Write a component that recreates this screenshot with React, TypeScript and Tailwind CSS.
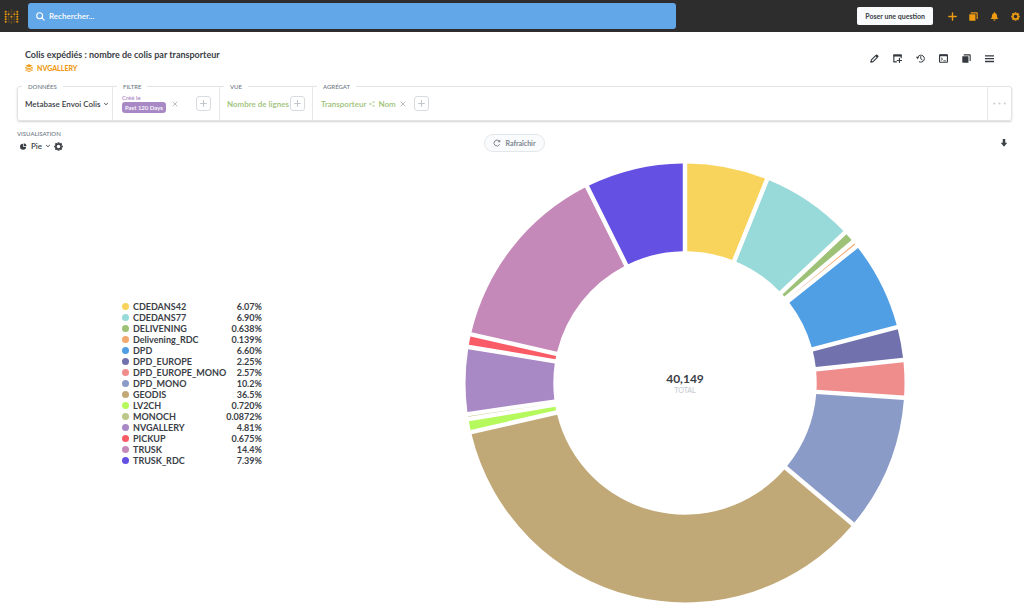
import React from "react";

type Slice = { name: string; value: number; label: string; color: string };

const slices: Slice[] = [
  { name: "CDEDANS42", value: 6.07, label: "6.07%", color: "#F9D45C" },
  { name: "CDEDANS77", value: 6.9, label: "6.90%", color: "#98D9D9" },
  { name: "DELIVENING", value: 0.638, label: "0.638%", color: "#9CC177" },
  { name: "Delivening_RDC", value: 0.139, label: "0.139%", color: "#F2A86F" },
  { name: "DPD", value: 6.6, label: "6.60%", color: "#509EE3" },
  { name: "DPD_EUROPE", value: 2.25, label: "2.25%", color: "#7172AD" },
  { name: "DPD_EUROPE_MONO", value: 2.57, label: "2.57%", color: "#EF8C8C" },
  { name: "DPD_MONO", value: 10.2, label: "10.2%", color: "#8A9BC7" },
  { name: "GEODIS", value: 36.5, label: "36.5%", color: "#C1A877" },
  { name: "LV2CH", value: 0.72, label: "0.720%", color: "#B5F95C" },
  { name: "MONOCH", value: 0.0872, label: "0.0872%", color: "#BCC78A" },
  { name: "NVGALLERY", value: 4.81, label: "4.81%", color: "#A989C5" },
  { name: "PICKUP", value: 0.675, label: "0.675%", color: "#F95C67" },
  { name: "TRUSK", value: 14.4, label: "14.4%", color: "#C589B9" },
  { name: "TRUSK_RDC", value: 7.39, label: "7.39%", color: "#6450E3" },
];

const OUTER = 219.5;
const INNER = 131.7;
const PAD = Math.PI / 180;

const point = (r: number, a: number) =>
  `${(r * Math.sin(a)).toFixed(2)},${(-r * Math.cos(a)).toFixed(2)}`;

function buildArcs() {
  const total = slices.reduce((sum, s) => sum + s.value, 0);
  const k = (2 * Math.PI - slices.length * PAD) / total;
  const padDistance = Math.hypot(OUTER, INNER) * Math.sin(PAD / 2);
  const p1 = Math.asin(padDistance / OUTER);
  const p0 = Math.asin(padDistance / INNER);
  let start = 0;
  return slices.map((s) => {
    const a0 = start;
    const a1 = start + s.value * k + PAD;
    start = a1;
    const mid = (a0 + a1) / 2;
    const o0 = a0 + p1;
    const o1 = a1 - p1;
    const collapsed = a1 - a0 <= 2 * p0;
    const i0 = collapsed ? mid : a0 + p0;
    const i1 = collapsed ? mid : a1 - p0;
    const large = o1 - o0 > Math.PI ? 1 : 0;
    const inner = collapsed ? "" : `A${INNER},${INNER} 0 ${large} 0 ${point(INNER, i0)}`;
    return {
      name: s.name,
      color: s.color,
      d: `M${point(OUTER, o0)}A${OUTER},${OUTER} 0 ${large} 1 ${point(OUTER, o1)}L${point(INNER, i1)}${inner}Z`,
    };
  });
}

const arcs = buildArcs();

function Icon({ children, className = "size-[10px]" }: { children: React.ReactNode; className?: string }) {
  return (
    <svg viewBox="0 0 32 32" fill="currentColor" aria-hidden="true" className={`block shrink-0 ${className}`}>
      {children}
    </svg>
  );
}

const stroke = { fill: "none", stroke: "currentColor", strokeWidth: 4, strokeLinecap: "round", strokeLinejoin: "round" } as const;

const PlusIcon = () => <path d="M16 3v26M3 16h26" {...stroke} strokeWidth={5} />;
const CloseIcon = () => <path d="M5 5l22 22M27 5L5 27" {...stroke} strokeWidth={5} />;
const ChevronIcon = () => <path d="M3 10l13 12 13-12" {...stroke} strokeWidth={7} />;
const DashboardsIcon = () => (
  <>
    <path d="M1 8h22v23H4a3 3 0 0 1-3-3z" />
    <path d="M6 1h22a3 3 0 0 1 3 3v21h-4V5H6z" />
  </>
);
const BellIcon = () => (
  <path d="M16 1c2 0 3 1.200 3 3 5 1.500 6 6 6 10 0 6 2 8 5 11H2c3-3 5-5 5-11 0-4 1-8.500 6-10 0-1.800 1-3 3-3zM12 27h8c0 3-2 4-4 4s-4-1-4-4z" />
);
const teeth = [0, 45, 90, 135, 180, 225, 270, 315];
const GearIcon = () => (
  <>
    <circle cx="16" cy="16" r="9" fill="none" stroke="currentColor" strokeWidth="5" />
    {teeth.map((angle) => (
      <path key={angle} d="M13 0.500h6l1 6h-8z" transform={`rotate(${angle} 16 16)`} />
    ))}
  </>
);

const toolbar: { label: string; icon: React.ReactNode }[] = [
  {
    label: "Modifier",
    icon: (
      <>
        <path d="M3 29l2-8L20 6l6 6L11 27z" {...stroke} />
        <path d="M20 5l4-4 7 7-4 4z" />
      </>
    ),
  },
  {
    label: "Ajouter au tableau de bord",
    icon: (
      <>
        <path d="M12 28H3V4h26v9" {...stroke} />
        <path d="M1 2h30v7H1z" />
        <path d="M23 15v15M15 23h16" {...stroke} />
      </>
    ),
  },
  {
    label: "Historique",
    icon: (
      <>
        <path d="M5 14A12.500 12.500 0 1 1 12 28" {...stroke} strokeWidth={3.5} />
        <path d="M0 10h11l-5 9z" />
        <path d="M17 9v8l5 4" {...stroke} strokeWidth={3.5} />
      </>
    ),
  },
  {
    label: "Voir le SQL",
    icon: (
      <>
        <rect x="2" y="2.500" width="28" height="27" rx="2" {...stroke} />
        <path d="M2 2h28v6H2z" />
        <path d="M8 14l5 4-5 4M17 24h6" {...stroke} strokeWidth={3} />
      </>
    ),
  },
  { label: "Dupliquer", icon: <DashboardsIcon /> },
  { label: "Référence", icon: <path d="M0 4h32v5H0zM0 14h32v5H0zM0 24h32v5H0z" /> },
];

function AddButton({ label }: { label: string }) {
  return (
    <button aria-label={label} className="flex size-[15px] shrink-0 items-center justify-center rounded-[3px] border border-[#d8dbe0] text-[#c0c5cc]">
      <Icon className="size-[7px]"><PlusIcon /></Icon>
    </button>
  );
}

function Section({ title, className, children }: { title: string; className: string; children: React.ReactNode }) {
  return (
    <section className={`relative flex items-center border-r border-[#e6e8ea] ${className}`}>
      <h2 className="absolute -top-1 left-1 bg-white px-[6px] text-[6px] leading-[7px] font-medium text-[#6d7884] uppercase">{title}</h2>
      {children}
    </section>
  );
}

const logoDots: [number, number, boolean][] = [];
const logoRows = ["10001", "11011", "10101", "10001", "10001"];
logoRows.forEach((row, y) => [...row].forEach((c, x) => logoDots.push([x, y, c === "1"])));

export default function App() {
  return (
    <div className="bg-white font-['Lato',sans-serif] text-[#3a4046]">
      <header className="flex h-8 items-center bg-[#2d2d2d] pr-1 pl-[4px]">
        <a href="#" aria-label="Accueil" className="mr-[9px]">
          <svg viewBox="0 0 15 15" className="block size-[15px]" aria-hidden="true">
            {logoDots.map(([x, y, on]) => (
              <circle key={`${x}-${y}`} cx={1.7 + x * 2.9} cy={2.7 + y * 2.5} r="1.050" fill="#EE9B12" opacity={on ? 0.95 : 0.25} />
            ))}
            <circle cx="7.500" cy="0.800" r="0.800" fill="#EE9B12" opacity="0.25" />
            <circle cx="7.500" cy="14.400" r="0.800" fill="#EE9B12" opacity="0.25" />
          </svg>
        </a>
        <label className="flex h-[26px] max-w-[648px] flex-1 items-center gap-1 rounded-[3px] bg-[#62a7e8] px-2 text-white">
          <Icon className="size-[9px]">
            <circle cx="13" cy="13" r="10.500" {...stroke} />
            <path d="M21 21l8 8" {...stroke} />
          </Icon>
          <input type="search" aria-label="Rechercher" placeholder="Rechercher..." className="min-w-0 flex-1 bg-transparent text-[8px] leading-[12px] font-semibold outline-none placeholder:text-white" />
        </label>
        <div className="ml-auto flex items-center gap-3">
          <button className="mr-[3px] h-[18px] rounded-[2px] bg-[#f9fbfc] px-2 text-[7px] leading-[10px] font-bold whitespace-nowrap">
            Poser une question
          </button>
          <button aria-label="Créer" className="text-[#EE9B12]"><Icon className="size-[9px]"><PlusIcon /></Icon></button>
          <button aria-label="Tableaux de bord" className="text-[#EE9B12]"><Icon className="size-[9px]"><DashboardsIcon /></Icon></button>
          <button aria-label="Notifications" className="text-[#EE9B12]"><Icon className="size-[9px]"><BellIcon /></Icon></button>
          <button aria-label="Paramètres" className="text-[#EE9B12]"><Icon className="size-[9px]"><GearIcon /></Icon></button>
        </div>
      </header>

      <main className="pt-4 pr-3 pl-[17px]">
        <div className="flex items-start justify-between pr-[18px] pl-2">
          <div>
            <h1 className="text-[9px] leading-[13px] font-bold">Colis expédiés : nombre de colis par transporteur</h1>
            <a href="#" className="mt-px flex items-center gap-1 text-[7px] leading-[12px] font-black text-[#EE9B12]">
              <Icon className="size-2">
                <path d="M16 1l15 6-15 6L1 7zM1 11l15 6 15-6v4l-15 6-15-6zM1 17l15 6 15-6v3l-15 6-15-6zM1 23l15 6 15-6v3l-15 6-15-6z" />
              </Icon>
              NVGALLERY
            </a>
          </div>
          <div className="mt-[6px] flex gap-[14px] text-[#33393f]">
            {toolbar.map((t) => (
              <button key={t.label} aria-label={t.label} title={t.label}>
                <Icon className="size-[9px]">{t.icon}</Icon>
              </button>
            ))}
          </div>
        </div>

        <div className="mt-3 flex h-[35px] rounded-[3px] border border-[#e2e4e6] text-[8px] leading-[10px] font-semibold shadow-[0_1px_2px_rgba(0,0,0,0.18)]">
          <Section title="Données" className="w-[95px] pl-[7px]">
            <button className="flex items-center gap-[3px] whitespace-nowrap">
              Metabase Envoi Colis
              <Icon className="size-[4px]"><ChevronIcon /></Icon>
            </button>
          </Section>
          <Section title="Filtre" className="w-[107px] justify-between pr-2 pl-[9px]">
            <div className="flex items-center gap-[6px]">
              <div className="flex flex-col items-start text-[6px] leading-[8px]">
                <span className="text-[#A989C5]">Créé le</span>
                <button className="h-[11px] rounded-[3px] bg-[#A989C5] px-[3px] whitespace-nowrap text-white">Past 120 Days</button>
              </div>
              <button aria-label="Retirer le filtre" className="text-[#b4bac1]"><Icon className="size-[6px]"><CloseIcon /></Icon></button>
            </div>
            <AddButton label="Ajouter un filtre" />
          </Section>
          <Section title="Vue" className="w-[93px] justify-between px-[7px]">
            <button className="whitespace-nowrap text-[#9CC177]">Nombre de lignes</button>
            <AddButton label="Ajouter une vue" />
          </Section>
          <Section title="Agrégat" className="flex-1 pl-2">
            <button className="flex items-center gap-[3px] text-[#9CC177]">
              Transporteur
              <Icon className="size-[6px]">
                <circle cx="5" cy="16" r="4" />
                <circle cx="26" cy="5" r="4" />
                <circle cx="26" cy="27" r="4" />
                <path d="M5 16L26 5M5 16l21 11" fill="none" stroke="currentColor" strokeWidth="2" />
              </Icon>
              Nom
            </button>
            <button aria-label="Retirer Nom" className="mr-2 ml-1 text-[#b4bac1]"><Icon className="size-[6px]"><CloseIcon /></Icon></button>
            <AddButton label="Ajouter un agrégat" />
          </Section>
          <button aria-label="Plus d'options" className="flex w-[23px] items-center justify-center text-[#c8ccd0]">
            <Icon className="size-[13px]">
              <circle cx="3" cy="16" r="2.500" />
              <circle cx="16" cy="16" r="2.500" />
              <circle cx="29" cy="16" r="2.500" />
            </Icon>
          </button>
        </div>

        <div className="mt-[9px] grid grid-cols-3 items-start">
          <div>
            <h2 className="text-[6px] leading-[8px] font-medium text-[#6d7884] uppercase">Visualisation</h2>
            <div className="mt-[3px] flex items-center gap-1 pl-[3px] text-[8px] leading-[10px] font-semibold">
              <button className="flex items-center gap-1">
                <Icon className="size-[7px]">
                  <path d="M14 3v14h14A14 14 0 1 1 14 3z" />
                  <path d="M17 1a14 14 0 0 1 13 13H17z" />
                </Icon>
                Pie
                <Icon className="size-[4px]"><ChevronIcon /></Icon>
              </button>
              <button aria-label="Options du graphique"><Icon className="size-[9px]"><GearIcon /></Icon></button>
            </div>
          </div>
          <button className="mt-1 flex h-[18px] items-center gap-1 justify-self-center rounded-full border border-[#e4e7ea] bg-[#f9fbfc] px-2 text-[7px] leading-[10px] font-bold text-[#7b868f]">
            <Icon className="size-[8px]">
              <path d="M26 23A12 12 0 1 1 25 8" {...stroke} />
              <path d="M29 2v11H18z" />
            </Icon>
            Rafraîchir
          </button>
          <button aria-label="Télécharger" className="mt-[9px] mr-1 justify-self-end">
            <Icon className="size-[8px]"><path d="M11 0h10v15h8L16 31 3 15h8z" /></Icon>
          </button>
        </div>

        <div className="mt-[11px] flex items-center pb-2">
          <table className="ml-[105px] w-[138px] text-[9px] leading-[11px] font-bold">
            <tbody>
              {slices.map((s) => (
                <tr key={s.name}>
                  <th scope="row" className="p-0 text-left font-bold">
                    <span className="flex items-center gap-1 whitespace-nowrap">
                      <span className="size-[7px] rounded-full" style={{ backgroundColor: s.color }} />
                      {s.name}
                    </span>
                  </th>
                  <td className="p-0 text-right">{s.label}</td>
                </tr>
              ))}
            </tbody>
          </table>
          <div className="ml-24 flex min-w-0 flex-1 justify-center">
            <svg viewBox="-220 -220 440 440" role="img" aria-label="Colis par transporteur" className="block aspect-square w-full max-w-[440px]">
              {arcs.map((a) => (
                <path key={a.name} d={a.d} fill={a.color} />
              ))}
              <text y="0" textAnchor="middle" className="fill-[#3a4046] text-[12px] font-bold">40,149</text>
              <text y="10" textAnchor="middle" className="fill-[#c3c8ce] text-[7px]">TOTAL</text>
            </svg>
          </div>
        </div>
      </main>
    </div>
  );
}
